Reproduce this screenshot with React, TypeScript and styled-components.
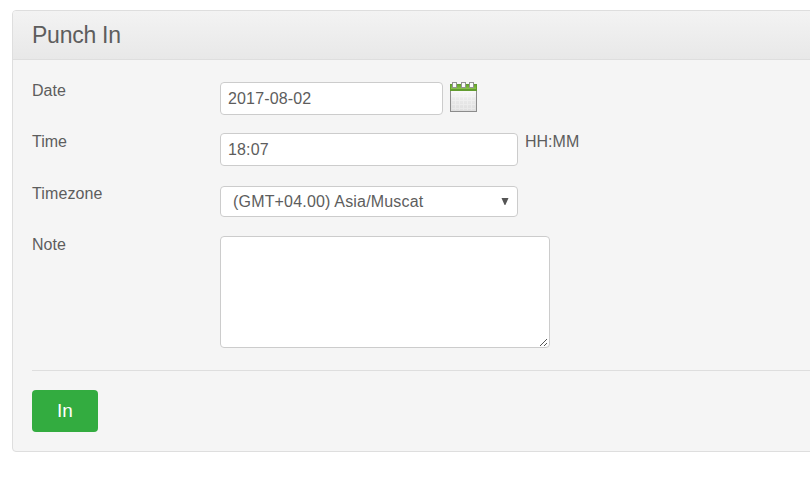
import React from "react";
import styled, { createGlobalStyle } from "styled-components";

const GlobalStyle = createGlobalStyle`
  * { box-sizing: border-box; }
  body {
    margin: 0;
    background: #fff;
    color: #5d5d5d;
    font: 16px/18px "Liberation Sans", Arial, sans-serif;
    overflow: hidden;
  }
`;

const Page = styled.main`
  padding: 10px 0 0 12px;
  width: 100%;
  height: 480px;
  overflow: hidden;
`;

const Panel = styled.section`
  width: calc(100% + 20px);
  height: 442px;
  background: #f5f5f5;
  border: 1px solid #dedede;
  border-radius: 4px;
  overflow: hidden;
`;

const PanelHeader = styled.header`
  height: 49px;
  padding: 0 19px;
  border-bottom: 1px solid #dedede;
  background: linear-gradient(#f3f3f3, #e8e8e8);
`;

const Title = styled.h1`
  margin: 0;
  font-size: 23px;
  font-weight: 400;
  line-height: 48px;
  letter-spacing: -0.25px;
`;

const Form = styled.form`
  padding: 22px 0 0 19px;
`;

const Row = styled.div<{ $height: number }>`
  display: flex;
  align-items: flex-start;
  height: ${(p) => p.$height}px;
`;

const Label = styled.label<{ $lineHeight?: number; $tracking?: number }>`
  width: 188px;
  line-height: ${(p) => p.$lineHeight ?? 18}px;
  letter-spacing: ${(p) => p.$tracking ?? 0}px;
`;

const TextInput = styled.input<{ $width: number }>`
  width: ${(p) => p.$width}px;
  height: 33px;
  padding: 0 7px;
  border: 1px solid #ccc;
  border-radius: 4px;
  background: #fff;
  color: inherit;
  font: inherit;
  letter-spacing: 0.15px;
  outline: none;
`;

const Hint = styled.span`
  margin-left: 7px;
`;

const CalendarButton = styled.button`
  display: block;
  margin: 0 0 0 6px;
  padding: 0;
  border: 0;
  background: none;
  svg { display: block; }
`;

const Select = styled.button`
  display: flex;
  align-items: center;
  justify-content: space-between;
  width: 298px;
  height: 31px;
  padding: 0 8px 0 12px;
  border: 1px solid #ccc;
  border-radius: 4px;
  background: #fff;
  color: inherit;
  font: inherit;
  letter-spacing: 0.18px;
  svg { display: block; }
`;

const NoteArea = styled.textarea`
  display: block;
  width: 330px;
  height: 112px;
  padding: 6px;
  border: 1px solid #ccc;
  border-radius: 4px;
  background: #fff;
  color: inherit;
  font: inherit;
  resize: none;
  outline: none;
`;

const NoteBox = styled.div`
  position: relative;
`;

const Grip = styled.svg`
  position: absolute;
  right: 2px;
  bottom: 2px;
`;

const Divider = styled.hr`
  margin: 0 0 19px;
  border: 0;
  height: 1px;
  background: #dedede;
`;

const SubmitButton = styled.button`
  display: block;
  width: 66px;
  height: 42px;
  padding: 0;
  border: 0;
  border-radius: 4px;
  background: #33ac40;
  color: #fff;
  font: 19px/42px "Liberation Sans", Arial, sans-serif;
`;

const CalendarIcon = () => (
  <svg width="30" height="31" viewBox="0 0 30 31" shapeRendering="crispEdges">
    <defs>
      <linearGradient id="sheet" x1="0" y1="0" x2="0" y2="1">
        <stop offset="0" stopColor="#fcfcfc" />
        <stop offset="0.45" stopColor="#e9e9e9" />
        <stop offset="1" stopColor="#dedede" />
      </linearGradient>
      <linearGradient id="strip" x1="0" y1="0" x2="0" y2="1">
        <stop offset="0" stopColor="#68a52e" />
        <stop offset="1" stopColor="#8bc34b" />
      </linearGradient>
    </defs>
    <rect x="1.5" y="7.5" width="26" height="22" fill="url(#sheet)" stroke="#8c8c8c" />
    <path d="M3 14.5H26M3 18.5H26M3 22.5H26M3 26.5H26M6.5 11V28M10.5 11V28M14.5 11V28M18.5 11V28M22.5 11V28" stroke="#fff" opacity="0.3" />
    <rect x="1" y="2" width="27" height="7" fill="#629c30" />
    <rect x="2" y="3" width="25" height="4" fill="url(#strip)" />
    {[3, 12, 20].map((x) => (
      <g key={x}>
        <rect x={x + 0.5} y="0.5" width="4" height="5" fill="#bdbdbd" stroke="#929292" />
        <rect x={x + 1} y="1" width="3" height="4" fill="#fafafa" />
      </g>
    ))}
  </svg>
);

export default function App() {
  return (
    <>
      <GlobalStyle />
      <Page>
        <Panel>
          <PanelHeader>
            <Title>Punch In</Title>
          </PanelHeader>
          <Form onSubmit={(e) => e.preventDefault()}>
            <Row $height={51}>
              <Label htmlFor="date">Date</Label>
              <TextInput id="date" $width={223} defaultValue="2017-08-02" />
              <CalendarButton type="button" aria-label="Choose date">
                <CalendarIcon />
              </CalendarButton>
            </Row>
            <Row $height={53}>
              <Label htmlFor="time">Time</Label>
              <TextInput id="time" $width={298} defaultValue="18:07" />
              <Hint>HH:MM</Hint>
            </Row>
            <Row $height={50}>
              <Label htmlFor="timezone" $lineHeight={16} $tracking={0.12}>Timezone</Label>
              <Select id="timezone" type="button">
                (GMT+04.00) Asia/Muscat
                <svg width="8" height="7" viewBox="0 0 8 7">
                  <path d="M0.5 0H7.5L4.4 7H3.6Z" fill="#555" />
                </svg>
              </Select>
            </Row>
            <Row $height={134}>
              <Label htmlFor="note">Note</Label>
              <NoteBox>
                <NoteArea id="note" />
                <Grip width="8" height="8" viewBox="0 0 8 8" shapeRendering="crispEdges">
                  <path d="M0 7h1v1H0zM1 6h1v1H1zM2 5h1v1H2zM3 4h1v1H3zM4 3h1v1H4zM5 2h1v1H5zM6 1h1v1H6zM4 7h1v1H4zM5 6h1v1H5zM6 5h1v1H6z" fill="#555" />
                </Grip>
              </NoteBox>
            </Row>
            <Divider />
            <SubmitButton type="submit">In</SubmitButton>
          </Form>
        </Panel>
      </Page>
    </>
  );
}
